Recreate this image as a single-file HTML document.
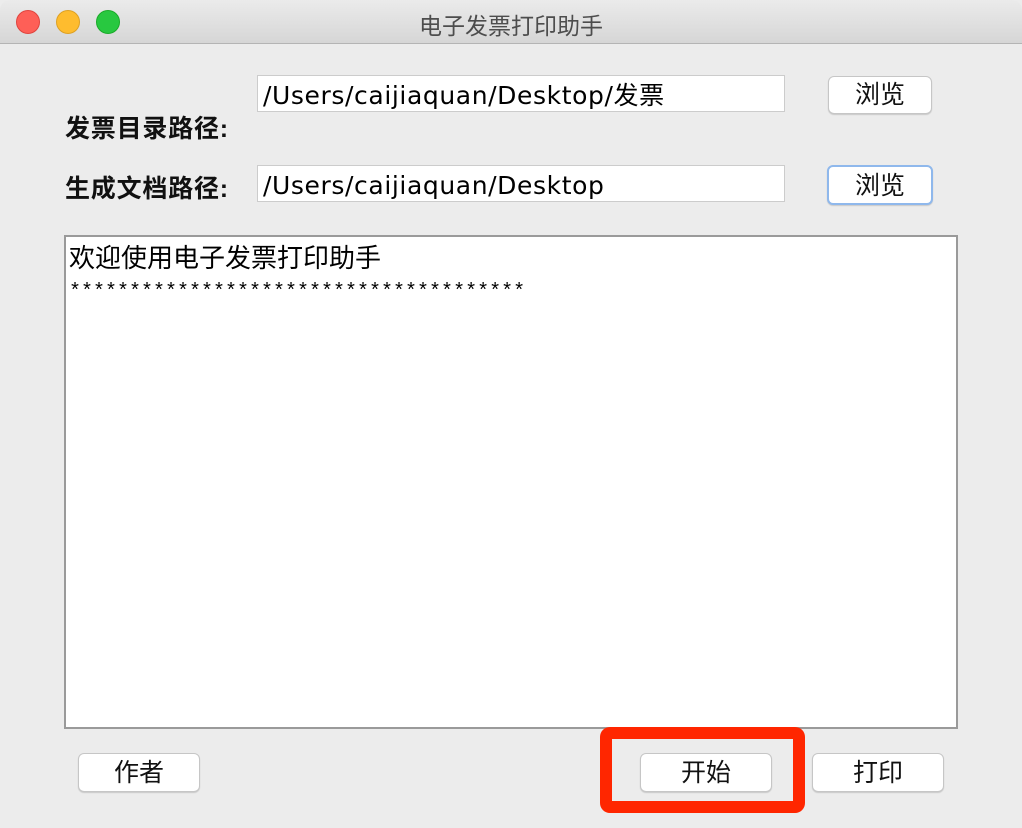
<!DOCTYPE html>
<html><head><meta charset="utf-8"><style>
body{margin:0;width:1022px;height:828px;background:#ececec;font-family:"Liberation Sans","Noto Sans CJK SC",sans-serif;position:relative;overflow:hidden}
.a{position:absolute}
.tb{left:0;top:0;width:1022px;height:43px;background:linear-gradient(#ebebeb,#d6d6d6);border-bottom:1px solid #b4b4b4;border-radius:10px 10px 0 0}
.dot{width:24px;height:24px;border-radius:50%;top:10px}
.title{left:0;width:1022px;top:7px;text-align:center;font-size:23px;color:#4d4d4d}
.lbl{font-size:25px;font-weight:bold;color:#111;letter-spacing:0.8px}
.tf{background:#fff;border:1px solid #ccc;box-sizing:border-box;font-family:"DejaVu Sans","Noto Sans CJK SC",sans-serif;font-size:25px;padding-left:5px;padding-top:2px;line-height:35px;color:#000;letter-spacing:0.6px;white-space:nowrap}
.btn{background:#fff;border:1px solid #c6c6c6;border-radius:6px;box-sizing:border-box;text-align:center;font-size:25px;box-shadow:0 1px 1px rgba(0,0,0,.15);color:#111}
</style></head><body>
<div class="a tb"></div>
<div class="a dot" style="left:16px;background:#fe5f57;border:1px solid #e0443e;box-sizing:border-box"></div>
<div class="a dot" style="left:56px;background:#febc2e;border:1px solid #dea123;box-sizing:border-box"></div>
<div class="a dot" style="left:96px;background:#28c840;border:1px solid #1aab29;box-sizing:border-box"></div>
<div class="a title">电子发票打印助手</div>
<div class="a lbl" style="left:65px;top:109px">发票目录路径:</div>
<div class="a lbl" style="left:65px;top:169px">生成文档路径:</div>
<div class="a tf" style="left:257px;top:75px;width:528px;height:37px">/Users/caijiaquan/Desktop/发票</div>
<div class="a tf" style="left:257px;top:165px;width:528px;height:37px">/Users/caijiaquan/Desktop</div>
<div class="a btn" style="left:828px;top:76px;width:104px;height:38px;line-height:36px">浏览</div>
<div class="a btn" style="left:827px;top:165px;width:106px;height:40px;line-height:38px;border:2px solid #8fb8ec">浏览</div>
<div class="a" style="left:64px;top:235px;width:894px;height:494px;background:#fff;border:2px solid #9a9a9a;box-sizing:border-box;padding:6px 3px;font-size:26px;line-height:30px;color:#000">欢迎使用电子发票打印助手<br><span style="font-family:'Liberation Mono',monospace;font-size:20px;line-height:18px">**************************************</span></div>
<div class="a btn" style="left:78px;top:753px;width:122px;height:39px;line-height:38px">作者</div>
<div class="a btn" style="left:640px;top:753px;width:132px;height:39px;line-height:38px">开始</div>
<div class="a btn" style="left:812px;top:753px;width:132px;height:39px;line-height:38px">打印</div>
<div class="a" style="left:600px;top:727px;width:205px;height:86px;border:12px solid #ff2600;border-radius:10px;box-sizing:border-box"></div>
</body></html>
